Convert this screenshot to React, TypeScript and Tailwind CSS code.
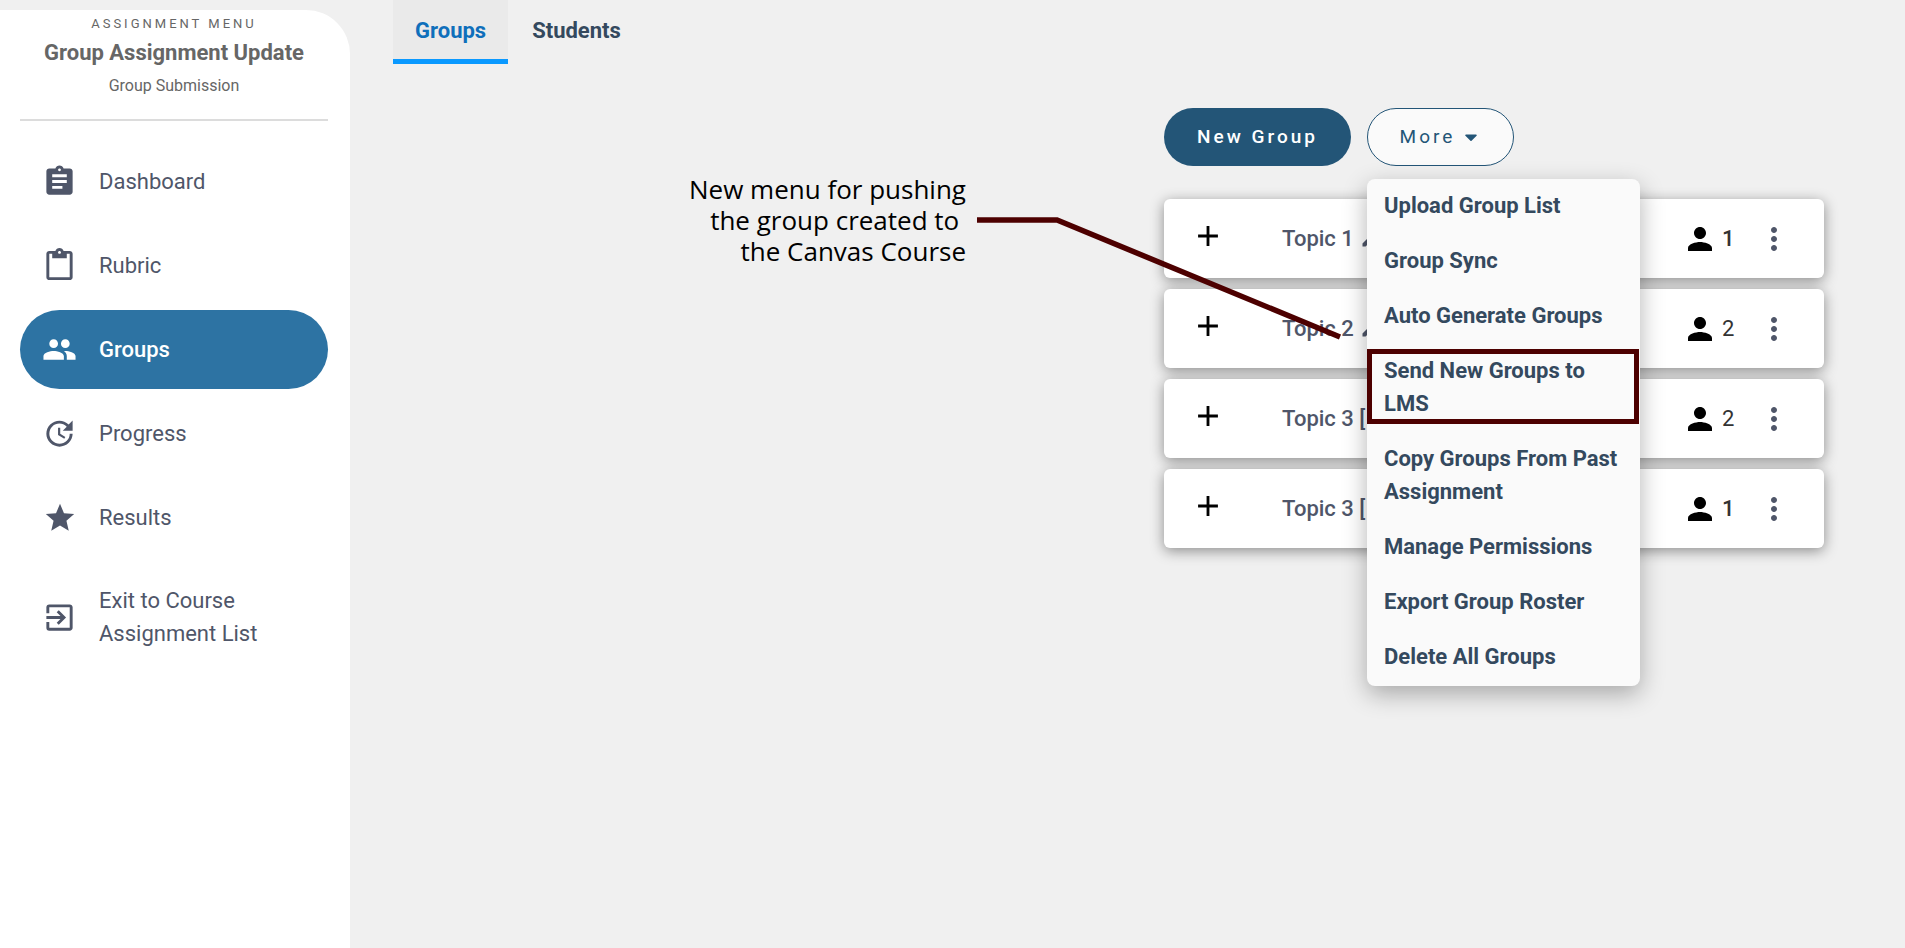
import React from 'react';
import {
  MdAdd,
  MdAssignment,
  MdContentPaste,
  MdEdit,
  MdExitToApp,
  MdMoreVert,
  MdPeople,
  MdPerson,
  MdStar,
  MdUpdate,
} from 'react-icons/md';
import { FaCaretDown } from 'react-icons/fa';

const navItems = [
  { label: 'Dashboard', icon: <MdAssignment className="w-[35px] h-[35px]" /> },
  { label: 'Rubric', icon: <MdContentPaste className="w-[35px] h-[35px]" /> },
  { label: 'Groups', icon: <MdPeople className="w-[35px] h-[35px]" />, active: true },
  { label: 'Progress', icon: <MdUpdate className="w-[35px] h-[35px]" /> },
  { label: 'Results', icon: <MdStar className="w-[34px] h-[34px]" /> },
  { label: 'Exit to Course Assignment List', icon: <MdExitToApp className="w-[35px] h-[35px]" /> },
];

const groups = [
  { id: 1, name: 'Topic 1', editable: true, members: 1 },
  { id: 2, name: 'Topic 2', editable: true, members: 2 },
  { id: 3, name: 'Topic 3 [', editable: false, members: 2 },
  { id: 4, name: 'Topic 3 [', editable: false, members: 1 },
];

const menuItems = [
  { label: 'Upload Group List' },
  { label: 'Group Sync' },
  { label: 'Auto Generate Groups' },
  { label: 'Send New Groups to LMS', highlighted: true },
  { label: 'Copy Groups From Past Assignment' },
  { label: 'Manage Permissions' },
  { label: 'Export Group Roster' },
  { label: 'Delete All Groups' },
];

const Sidebar: React.FC = () => (
  <aside className="w-[350px] shrink-0 mt-[10px] pl-5 pr-[22px] bg-white rounded-tr-[44px] text-[#4f5669]">
    <div className="pt-1 pb-[19px] border-b-2 border-[#dcdcdc] text-center text-[#666666]">
      <p className="text-[13px] leading-5 tracking-[3px] uppercase">Assignment Menu</p>
      <h1 className="text-[22px] leading-[38px] font-bold">Group Assignment Update</h1>
      <p className="text-[16px] leading-7">Group Submission</p>
    </div>
    <nav className="flex flex-col gap-[5px] pt-[21px]">
      {navItems.map((item) => (
        <a
          key={item.label}
          href="#"
          className={`flex items-center gap-[22px] py-[22px] pl-[22px] pr-12 rounded-full text-[22px] leading-[33px] ${
            item.active ? 'bg-[#2d73a3] text-white font-medium' : ''
          }`}
        >
          <span className="w-[35px] min-h-[35px] shrink-0 flex items-center justify-center">{item.icon}</span>
          {item.label}
        </a>
      ))}
    </nav>
  </aside>
);

const Tabs: React.FC = () => (
  <div className="flex gap-0.5 text-[22px] leading-[33px] font-bold">
    <button className="h-16 px-[22px] pt-0.5 bg-[#eaeaea] border-b-[5px] border-[#0a99ff] text-[#0f6fbb]">Groups</button>
    <button className="h-16 px-[22px] pt-0.5 border-b-[5px] border-transparent text-[#34495e]">Students</button>
  </div>
);

const MoreMenu: React.FC = () => (
  <div className="relative">
    <button className="h-[58px] w-[147px] flex items-center justify-center gap-1.5 rounded-full border border-[#235577] bg-[#fafafa] text-[#235577] text-[19px] tracking-[3px]">
      More
      <FaCaretDown className="w-5 h-5" />
    </button>
    <ul className="absolute z-10 top-full left-0 mt-[13px] pb-px w-[273px] rounded-lg bg-[#fafafa] shadow-[0_8px_24px_rgba(0,0,0,0.3)]">
      {menuItems.map((item) => (
        <li key={item.label} className="relative">
          <button className="w-full pt-[10px] pb-3 pl-[17px] pr-4 text-left text-[22px] leading-[33px] font-bold text-[#34495e]">
            {item.label}
          </button>
          {item.highlighted && (
            <span className="absolute left-0 right-px top-[5px] bottom-2 border-[5px] border-[#4d0000] pointer-events-none" />
          )}
        </li>
      ))}
    </ul>
  </div>
);

const GroupRow: React.FC<{ group: (typeof groups)[number] }> = ({ group }) => (
  <li className="flex items-center h-[79px] pl-[27px] pr-8 rounded-md bg-white shadow-[0_3px_14px_rgba(0,0,0,0.42)]">
    <button aria-label={`Expand ${group.name}`} className="pb-1.5 text-black">
      <MdAdd className="w-[34px] h-[34px]" />
    </button>
    <div className="flex-1 flex items-center gap-1.5 pl-[57px] text-[22px] font-medium text-[#4f5669]">
      {group.name}
      {group.editable && <MdEdit className="w-5 h-5" />}
    </div>
    <MdPerson className="w-9 h-9 text-black" />
    <span
      className={`w-[38px] pl-1 text-[22px] text-[#333333] ${group.members > 1 ? 'font-normal' : 'font-medium'}`}
    >
      {group.members}
    </span>
    <button aria-label={`Options for ${group.name}`} className="text-[#4f5669]">
      <MdMoreVert className="w-9 h-9" />
    </button>
  </li>
);

const App: React.FC = () => (
  <div className="flex min-h-screen bg-[#f0f0f0] font-[Roboto,sans-serif]">
    <Sidebar />
    <main className="flex-1 pl-[43px] pr-[81px]">
      <Tabs />
      <div className="flex justify-end gap-[198px] pt-11">
        <p className="pt-[66px] text-right text-[26px] leading-[31px] font-['Open_Sans',sans-serif] text-black">
          New menu for pushing
          <br />
          the group created to&nbsp;
          <br />
          the Canvas Course
        </p>
        <section className="relative w-[660px]">
          <div className="flex gap-4">
            <button className="h-[58px] w-[187px] rounded-full bg-[#235577] text-white text-[19px] font-medium tracking-[3px]">
              New Group
            </button>
            <MoreMenu />
          </div>
          <ul className="flex flex-col gap-[11px] pt-[33px]">
            {groups.map((group) => (
              <GroupRow key={group.id} group={group} />
            ))}
          </ul>
          {/* pointer from the note to the menu entry */}
          <svg
            className="absolute z-20 -left-[187px] top-[100px] w-[370px] h-[140px] pointer-events-none"
            viewBox="0 0 370 140"
            fill="none"
            stroke="#4d0000"
            strokeWidth="5.5"
          >
            <polyline points="0,12 80,12 363,129" />
          </svg>
        </section>
      </div>
    </main>
  </div>
);

export default App;
